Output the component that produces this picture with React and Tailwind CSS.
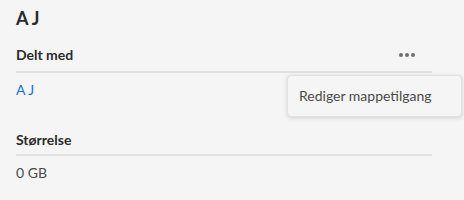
import React from 'react';

export default function App() {
    return (
        <div className="relative w-[464px] h-[200px] overflow-hidden bg-[#f5f5f5] pl-4 pr-8 font-['Lato',sans-serif]">
            {/* Tittel */}
            <h1 className="pt-[6px] text-[18px] leading-6 font-bold text-[#2c2c2c]">A J</h1>

            {/* Delt med */}
            <div className="mt-[15px] flex items-center justify-between border-b-2 border-[#e1e1e1] pb-[6px]">
                <span className="text-[14px] leading-5 font-bold text-[#2c2c2c]">Delt med</span>
                <button type="button" className="mr-[17px] flex items-center gap-[2px]">
                    <span className="w-[4px] h-[4px] rounded-full bg-[#6e6e6e]"></span>
                    <span className="w-[4px] h-[4px] rounded-full bg-[#6e6e6e]"></span>
                    <span className="w-[4px] h-[4px] rounded-full bg-[#6e6e6e]"></span>
                </button>
            </div>
            <div className="mt-[7px] text-[14px] leading-5 text-[#1473e6]">A J</div>

            {/* Størrelse */}
            <div className="mt-[30px] border-b-2 border-[#e1e1e1] pb-[4px] text-[14px] leading-5 font-bold text-[#2c2c2c]">
                Størrelse
            </div>
            <div className="mt-[7px] text-[14px] leading-5 text-[#4b4b4b]">0 GB</div>

            {/* Meny */}
            <div className="absolute left-[287px] top-[75px] w-[175px] h-[42px] rounded-[4px] border border-[#e1e1e1] bg-[#f5f5f5] shadow-[0_1px_4px_rgba(0,0,0,0.15)] flex items-center pl-[11px]">
                <span className="text-[14px] leading-5 text-[#4b4b4b]">Rediger mappetilgang</span>
            </div>
        </div>
    );
}
